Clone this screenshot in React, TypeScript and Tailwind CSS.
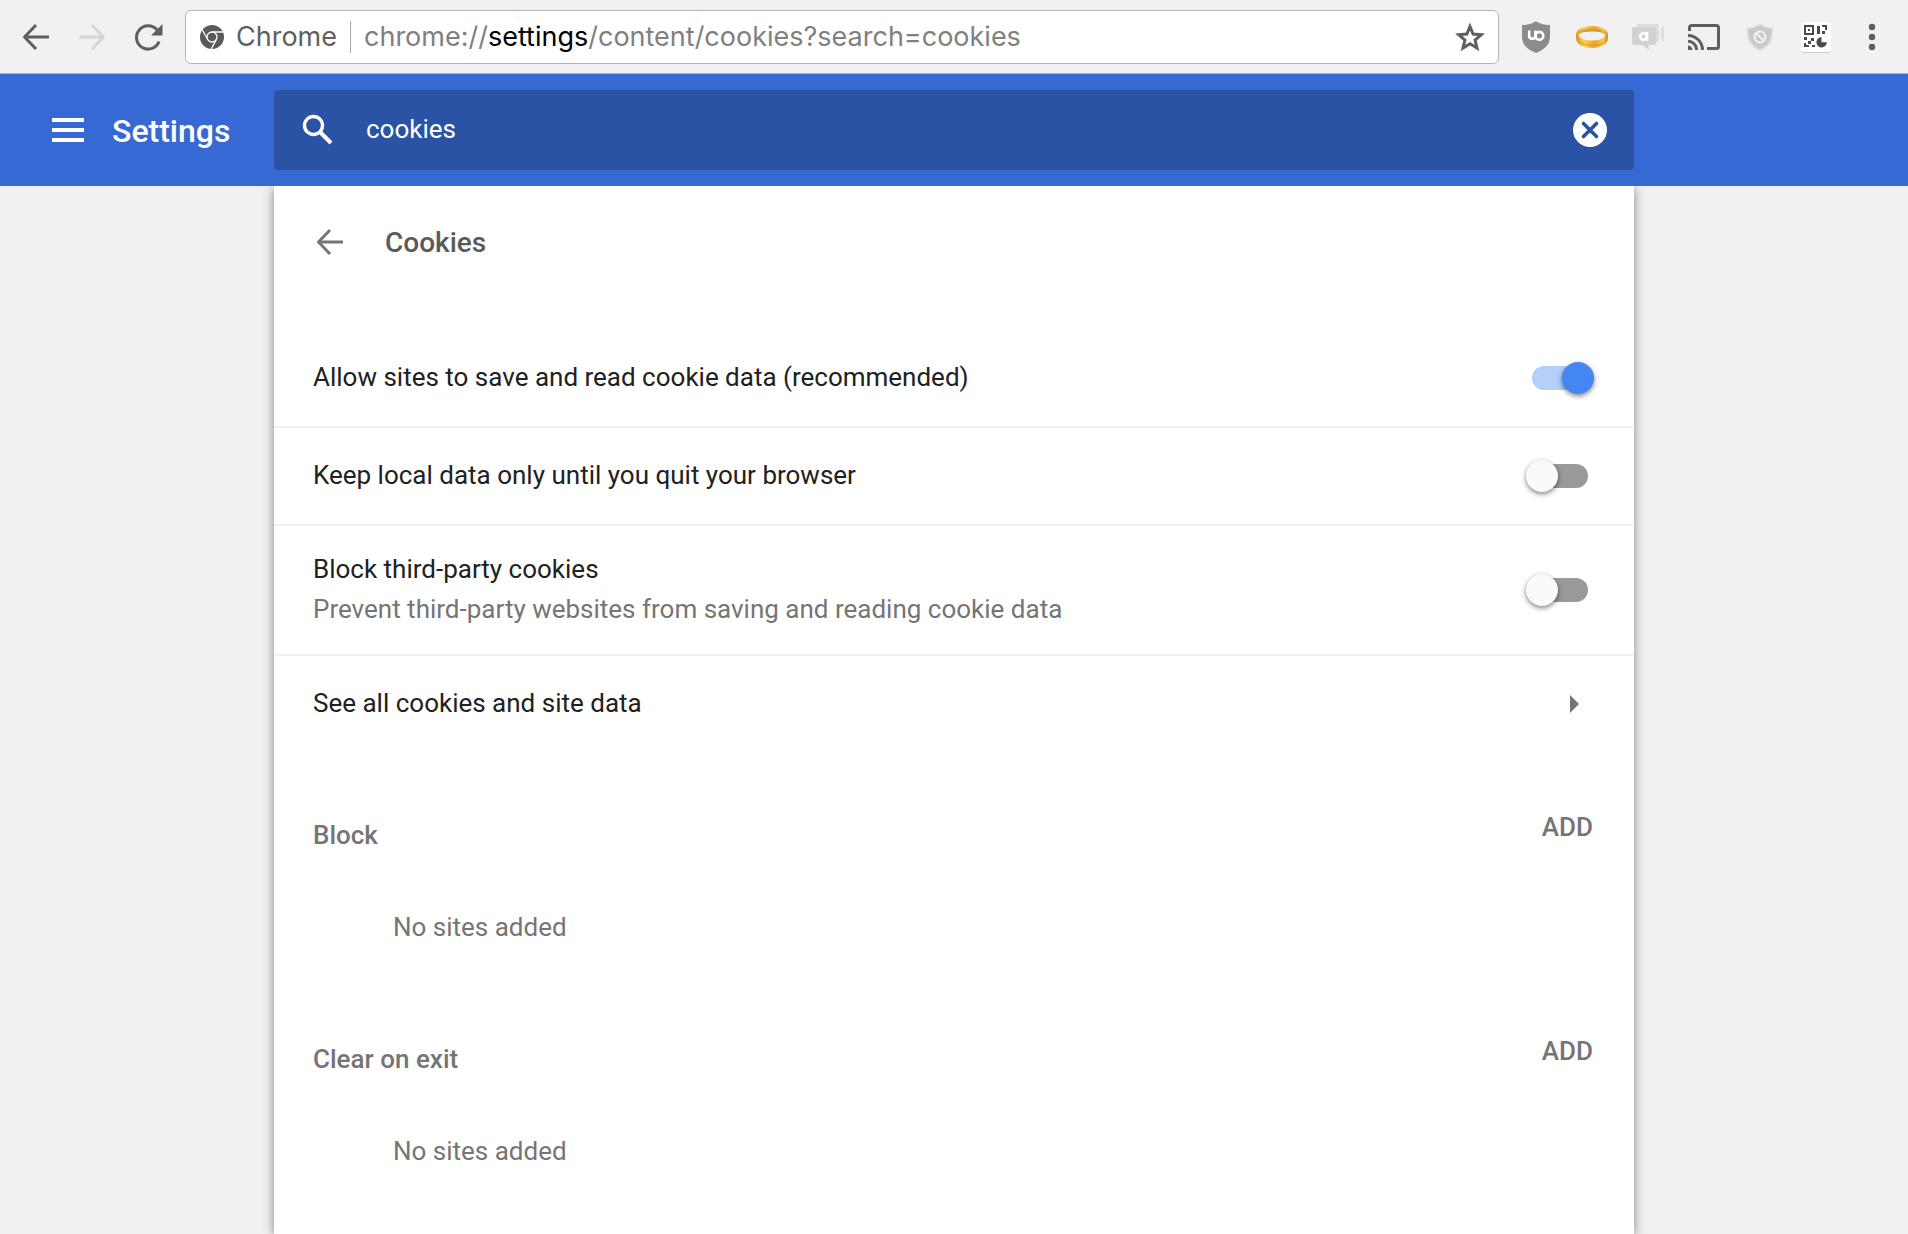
import { useState } from 'react';

function BackIcon({ className }: { className?: string }) {
  return (
    <svg viewBox="0 0 32 32" className={className} fill="none" stroke="currentColor" strokeWidth="3" aria-hidden="true">
      <path d="M29 16H5" />
      <path d="M16 4 4.5 16 16 28" strokeLinejoin="round" />
    </svg>
  );
}

function ReloadIcon() {
  return (
    <svg viewBox="0 0 32 32" className="size-8" aria-hidden="true">
      <path d="M27 20.500A11.600 11.600 0 1 1 25 9" fill="none" stroke="currentColor" strokeWidth="3" />
      <path d="M30.500 3v11.500H19z" fill="currentColor" />
    </svg>
  );
}

function ChromeIcon() {
  return (
    <svg viewBox="0 0 24 24" className="size-6 shrink-0" aria-hidden="true">
      <circle cx="12" cy="12" r="12" fill="#5a5a5a" />
      <g fill="none" stroke="#fff" strokeWidth="1.3">
        <circle cx="12" cy="12" r="5" />
        <path d="M12 7H23.2M7.7 14.5 2.2 4.8M16.3 14.5 11.2 24" />
      </g>
    </svg>
  );
}

function StarIcon() {
  return (
    <svg viewBox="0 0 32 32" className="size-8" aria-hidden="true">
      <path
        d="M16 5.500l3.100 7.500 8.200.7-6.200 5.400 1.900 8-7-4.300-7 4.300 1.900-8-6.200-5.400 8.200-.7z"
        fill="none"
        stroke="currentColor"
        strokeWidth="3"
      />
    </svg>
  );
}

function UBlockIcon() {
  return (
    <svg viewBox="0 0 32 32" className="size-8" aria-hidden="true">
      <path d="M16 0C13 2.500 7 4 2 4v12c0 8 6 12.500 14 16 8-3.500 14-8 14-16V4C25 4 19 2.500 16 0z" fill="#8c8c8c" />
      <g fill="none" stroke="#fff" strokeWidth="2.600">
        <path d="M9.200 9.500v6a3.300 3.300 0 0 0 6.300 0V9.500" />
        <circle cx="19.400" cy="14.800" r="3.900" />
      </g>
    </svg>
  );
}

function RingIcon() {
  return (
    <svg viewBox="0 0 32 32" className="size-8" aria-hidden="true">
      <defs>
        <linearGradient id="gold" x1="0" x2="1" y1="0" y2="0">
          <stop offset="0" stopColor="#dc9420" />
          <stop offset=".25" stopColor="#fbd050" />
          <stop offset=".6" stopColor="#eda52c" />
          <stop offset=".85" stopColor="#fcc850" />
          <stop offset="1" stopColor="#cf8a1c" />
        </linearGradient>
      </defs>
      <path
        d="M0 14C0 8.500 7 5 16 5s16 3.500 16 9v3C32 23.500 25 27 16 27S0 23.500 0 17zM3 14c0 3.500 6 5.600 13 5.600S29 17.500 29 14 23.500 9.500 16 9.500 3 10.500 3 14z"
        fill="url(#gold)"
        fillRule="evenodd"
      />
      <path d="M3 13C5 9.300 10 7.500 16 7.500S27 9.300 29 13c-3-2-7.500-2.600-13-2.600S6 11 3 13z" fill="#d99a34" />
      <path d="M1.500 19.500c2.500 3.500 8 4.500 14.500 4.500s12-1 14.500-4.500" fill="none" stroke="#d08a20" strokeWidth="1" strokeDasharray="2 1" />
    </svg>
  );
}

function ChatIcon() {
  return (
    <svg viewBox="0 0 32 32" className="size-8" aria-hidden="true">
      <path d="M5 3h20a2 2 0 0 1 2 2v14a2 2 0 0 1-2 2H5z" fill="#dcdcdc" />
      <path d="M29 8l3-4v17l-3-4z" fill="#dcdcdc" />
      <path d="M2 6h20a2 2 0 0 1 2 2v14a2 2 0 0 1-2 2h-5.500v5L10.500 24H2a2 2 0 0 1-2-2V8a2 2 0 0 1 2-2z" fill="#d2d2d2" />
      <g fill="none" stroke="#fff" strokeWidth="2.400">
        <circle cx="11.500" cy="15.500" r="3.300" />
        <path d="M15.200 11v9" />
      </g>
    </svg>
  );
}

function CastIcon() {
  return (
    <svg viewBox="0 0 32 32" className="size-8" fill="none" stroke="currentColor" strokeWidth="3" aria-hidden="true">
      <path d="M1.500 10V6.500a2 2 0 0 1 2-2h25a2 2 0 0 1 2 2v19a2 2 0 0 1-2 2H19" />
      <path d="M0 14.500A14.500 14.500 0 0 1 14.500 29M0 20.300A8.700 8.700 0 0 1 8.700 29" />
      <path d="M0 24.500A4.500 4.500 0 0 1 4.500 29H0z" fill="currentColor" stroke="none" />
    </svg>
  );
}

function BlockShieldIcon() {
  return (
    <svg viewBox="0 0 32 32" className="size-8" aria-hidden="true">
      <path d="M16 3.500c-3.500 2.700-8 3.500-12.500 4C3.500 18 6 25 16 29c10-4 12.500-11 12.500-21.500-4.500-.5-9-1.300-12.500-4z" fill="#c9c9c9" stroke="#dedede" strokeWidth="1.500" />
      <circle cx="16" cy="16" r="5.500" fill="none" stroke="#f2f2f2" strokeWidth="2" />
      <path d="M12.200 12.200l7.600 7.600" stroke="#f2f2f2" strokeWidth="2" />
    </svg>
  );
}

function QrIcon() {
  return (
    <svg viewBox="0 0 32 32" className="size-8" aria-hidden="true">
      <rect x="1" y="2" width="30" height="30" rx="3" fill="#d0d0d0" />
      <rect x="1" y="1" width="30" height="30" rx="3" fill="#fff" />
      <g fill="#4a4a4a">
        <path d="M4 4h10v10H4zM6 6v6h6V6z" fillRule="evenodd" />
        <path d="M8 8h2v2H8zM17 5h3v8h-3zM22 4h5v5h-2V6h-3zM22 10h3v3h-3z" />
        <path d="M4 16h3v3H4zM11 17h3v3h-3zM8 20h3v3H8zM4 22h2v4h-2zM4 24h5v2H4zM12 24h3v2h-3z" />
        <path d="M21.500 16a5.200 5.200 0 1 0 5.300 5.300h-5.300z" />
      </g>
    </svg>
  );
}

function MoreIcon() {
  return (
    <svg viewBox="0 0 32 32" className="size-8" fill="currentColor" aria-hidden="true">
      <circle cx="16" cy="6" r="3.200" />
      <circle cx="16" cy="16" r="3.200" />
      <circle cx="16" cy="26" r="3.200" />
    </svg>
  );
}

const extensions = [
  { label: 'uBlock Origin', icon: <UBlockIcon /> },
  { label: 'Ring', icon: <RingIcon /> },
  { label: 'Chat', icon: <ChatIcon /> },
  { label: 'Cast', icon: <CastIcon /> },
  { label: 'Blocker', icon: <BlockShieldIcon /> },
  { label: 'QR code', icon: <QrIcon /> },
];

function BrowserToolbar() {
  return (
    <header className="flex h-[74px] items-center border-b border-[#b4b0b0] bg-[#f1f1f1] px-5 text-[#5f5f5f]">
      <div className="flex gap-6">
        <button type="button" aria-label="Back" className="size-8">
          <BackIcon className="size-8" />
        </button>
        <button type="button" aria-label="Forward" disabled className="size-8 text-[#d6d6d6]">
          <BackIcon className="size-8 rotate-180" />
        </button>
        <button type="button" aria-label="Reload" className="size-8">
          <ReloadIcon />
        </button>
      </div>
      <div className="ml-[21px] flex h-[54px] flex-1 items-center rounded-md border border-[#b4b4b4] bg-white pr-3 pl-3.5 font-[Inter,sans-serif] text-[27px]">
        <ChromeIcon />
        <span className="ml-3 pt-0.5">Chrome</span>
        <span className="mx-[13px] h-8 w-px bg-[#a8a8a8]" />
        <div role="textbox" aria-label="Address" contentEditable suppressContentEditableWarning className="flex-1 pt-0.5 whitespace-nowrap text-[#808080]">
          chrome://<span className="text-black">settings</span>/content/cookies?search=cookies
        </div>
        <button type="button" aria-label="Bookmark this page" className="size-8">
          <StarIcon />
        </button>
      </div>
      <div className="ml-[21px] flex gap-6">
        {extensions.map((item) => (
          <button key={item.label} type="button" aria-label={item.label} className="size-8">
            {item.icon}
          </button>
        ))}
        <button type="button" aria-label="Menu" className="size-8">
          <MoreIcon />
        </button>
      </div>
    </header>
  );
}

function SettingsBar() {
  const [query, setQuery] = useState('cookies');
  return (
    <div className="relative z-10 grid h-28 grid-cols-[1fr_minmax(0,1360px)_1fr] items-center bg-[#3669d3] text-white">
      <div className="flex items-center gap-7 pl-[52px]">
        <button type="button" aria-label="Main menu" className="flex flex-col gap-1.5">
          <span className="h-1 w-8 bg-white" />
          <span className="h-1 w-8 bg-white" />
          <span className="h-1 w-8 bg-white" />
        </button>
        <h1 className="pt-0.5 text-[32px] leading-10 font-medium">Settings</h1>
      </div>
      <div className="flex h-20 items-center rounded-sm bg-[#2a53a5] pr-[27px] pl-7">
        <svg viewBox="0 0 32 32" className="size-8 shrink-0" fill="none" stroke="currentColor" aria-hidden="true">
          <circle cx="11.500" cy="11.500" r="9" strokeWidth="3.400" />
          <path d="M18.500 18.500 29 29" strokeWidth="4" />
        </svg>
        <input
          type="text"
          aria-label="Search settings"
          value={query}
          onChange={(e) => setQuery(e.target.value)}
          className="ml-8 min-w-0 flex-1 bg-transparent pb-0.5 text-[26px] leading-8 outline-none"
        />
        <button type="button" aria-label="Clear search" onClick={() => setQuery('')} className="size-[34px]">
          <svg viewBox="0 0 34 34" className="size-[34px]" aria-hidden="true">
            <circle cx="17" cy="17" r="17" fill="#fff" />
            <path d="M10.500 10.500l13 13M23.500 10.500l-13 13" stroke="#2a53a5" strokeWidth="3.600" strokeLinecap="round" />
          </svg>
        </button>
      </div>
    </div>
  );
}

function ToggleRow({ label, detail, on = false }: { label: string; detail?: string; on?: boolean }) {
  return (
    <label className="flex items-center justify-between border-b-2 border-[#f0f0f0] py-[23px] pr-[46px] pl-[39px] leading-10">
      <span className="flex min-h-[50px] flex-col justify-center pb-0.5">
        {label}
        {detail && <small className="text-[26px] text-[#757575]">{detail}</small>}
      </span>
      <input
        type="checkbox"
        role="switch"
        defaultChecked={on}
        className="relative h-6 w-14 shrink-0 appearance-none rounded-full bg-[#999] before:absolute before:-top-1 before:-left-1.5 before:size-8 before:rounded-full before:bg-[#fafafa] before:shadow-[0_2px_5px_rgba(0,0,0,0.5)] checked:bg-[#b4cffa] checked:before:left-[30px] checked:before:bg-[#4486f4]"
      />
    </label>
  );
}

function SiteList({ title }: { title: string }) {
  return (
    <section className="text-[#757575]">
      <div className="flex h-32 items-start justify-between pt-12 pr-[41px] pl-[39px]">
        <h3 className="pt-[19px] leading-8 font-medium">{title}</h3>
        <button type="button" className="h-14 pb-0.5 font-medium">
          ADD
        </button>
      </div>
      <p className="flex h-24 items-center pb-0.5 pl-[119px]">No sites added</p>
    </section>
  );
}

export default function App() {
  return (
    <div className="flex min-h-screen flex-col overflow-hidden bg-[#f0f0f0] font-[Roboto,sans-serif]">
      <BrowserToolbar />
      <SettingsBar />
      <main className="mx-auto w-full max-w-[1360px] flex-1 bg-white text-[26px] text-[#212121] shadow-[0_2px_10px_rgba(0,0,0,0.45)]">
        <div className="mb-8 flex h-28 items-center gap-[39px] pl-10">
          <button type="button" aria-label="Go back" className="size-8 text-[#757575]">
            <BackIcon className="size-8" />
          </button>
          <h2 className="pt-0.5 text-[28px] font-medium text-[#5a5a5a]">Cookies</h2>
        </div>
        <ToggleRow label="Allow sites to save and read cookie data (recommended)" on />
        <ToggleRow label="Keep local data only until you quit your browser" />
        <ToggleRow
          label="Block third-party cookies"
          detail="Prevent third-party websites from saving and reading cookie data"
        />
        <button type="button" className="flex h-24 w-full items-center justify-between pr-[54px] pl-[39px]">
          <span className="pb-0.5">See all cookies and site data</span>
          <svg viewBox="0 0 10 18" className="h-[18px] w-2.5" aria-hidden="true">
            <path d="M0 0l9 9-9 9z" fill="#757575" />
          </svg>
        </button>
        <SiteList title="Block" />
        <SiteList title="Clear on exit" />
      </main>
    </div>
  );
}
